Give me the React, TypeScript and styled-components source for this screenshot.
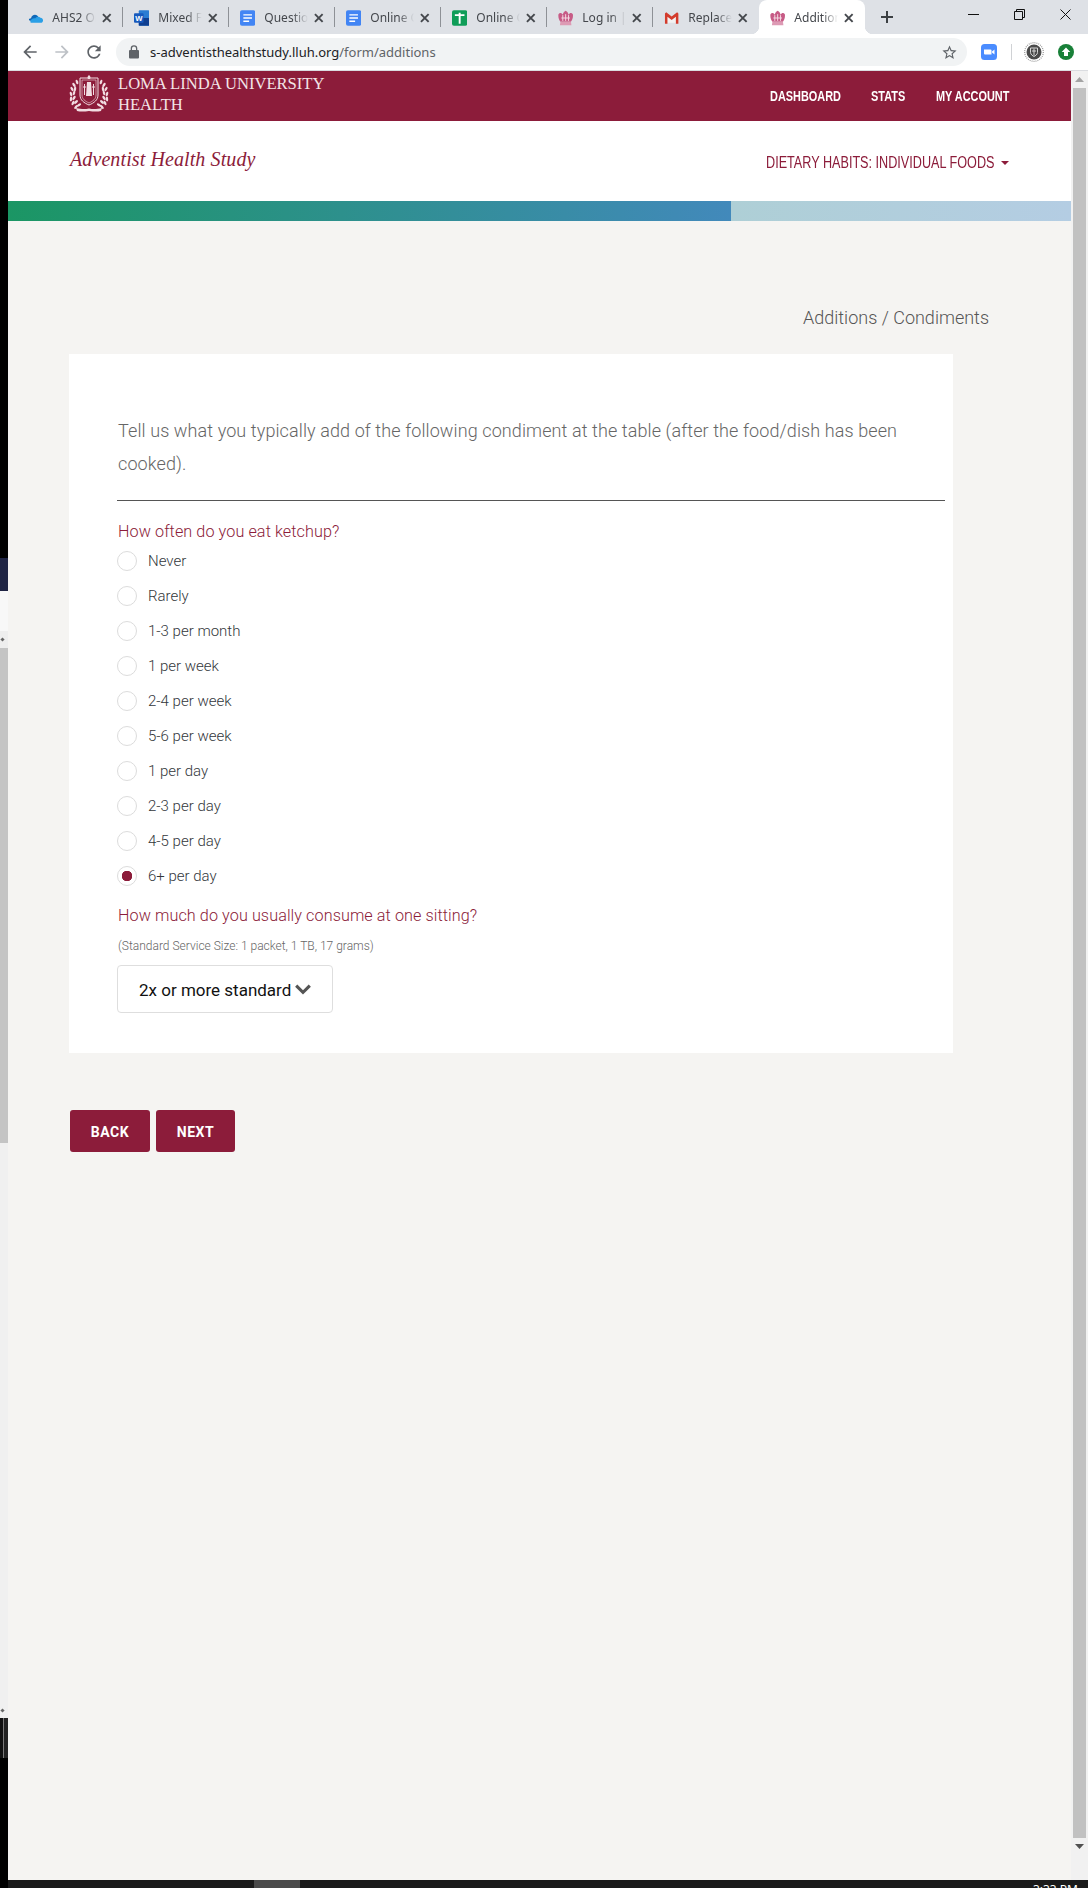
import styled, { createGlobalStyle } from 'styled-components';

const MAROON = '#8c1c3a';

const GlobalStyle = createGlobalStyle`
	html, body {
		margin: 0;
		padding: 0;
		background: #000;
	}
	* {
		box-sizing: border-box;
	}
`;

type TabKind = 'onedrive' | 'word' | 'docs' | 'sheets' | 'crest' | 'gmail';

const TABS: { kind: TabKind; title: string; active?: boolean }[] = [
	{ kind: 'onedrive', title: 'AHS2 Online' },
	{ kind: 'word', title: 'Mixed Foods' },
	{ kind: 'docs', title: 'Question list' },
	{ kind: 'docs', title: 'Online Question' },
	{ kind: 'sheets', title: 'Online Question' },
	{ kind: 'crest', title: 'Log in | Adventist' },
	{ kind: 'gmail', title: 'Replace text' },
	{ kind: 'crest', title: 'Additions', active: true },
];

const FREQUENCIES = [
	'Never',
	'Rarely',
	'1-3 per month',
	'1 per week',
	'2-4 per week',
	'5-6 per week',
	'1 per day',
	'2-3 per day',
	'4-5 per day',
	'6+ per day',
];

// leaves of the wreath, left side; the right side is the mirror of it
const LEAVES = [
	[8, 7, -20],
	[5, 10, -35],
	[6, 14, 10],
	[3, 14, -30],
	[5, 18, 15],
	[2, 19, -15],
	[5, 23, 35],
	[2, 24, 5],
	[7, 27, 50],
	[4, 28, 25],
	[10, 30, 60],
	[7, 32, 40],
];

const Favicon = ({ kind }: { kind: TabKind }) => {
	if (kind === 'onedrive') {
		return (
			<svg width='16' height='16' viewBox='0 0 16 16'>
				<path d='M3.2 8.2C3.6 5.6 6.8 3.6 9.2 5.2c1 .6 1.5 1.4 1.7 2.3L6 11H3C1 11-.4 8.6 3.2 8.2z' fill='#0f68b8' />
				<path d='M3 13h10.4c3-.4 3.2-4.8-.4-5.2-1.6-2-4.4-1.2-5.6.6C5.4 8 4 9 3.2 10 2.4 11 2 12.4 3 13z' fill='#2a9fe6' />
			</svg>
		);
	}
	if (kind === 'word') {
		return (
			<svg width='16' height='16' viewBox='0 0 16 16'>
				<rect x='5' y='0' width='11' height='16' rx='1' fill='#2b7cd3' />
				<rect x='5' y='8' width='11' height='8' fill='#103f91' />
				<rect x='0' y='3' width='10' height='10' rx='1' fill='#185abd' />
				<text x='5' y='11' fontSize='8' fontWeight='700' fill='#fff' textAnchor='middle' fontFamily='Liberation Sans, sans-serif'>
					W
				</text>
			</svg>
		);
	}
	if (kind === 'docs') {
		return (
			<svg width='16' height='16' viewBox='0 0 16 16'>
				<rect width='16' height='16' rx='2' fill='#4285f4' />
				<path d='M3.5 4h9v1.5h-9zM3.5 7.3h9v1.5h-9zM3.5 10.6h6v1.5h-6z' fill='#fff' />
			</svg>
		);
	}
	if (kind === 'sheets') {
		return (
			<svg width='16' height='16' viewBox='0 0 16 16'>
				<rect width='16' height='16' rx='2' fill='#0f9d58' />
				<path d='M3 4h4V2.500h2V4h4v2H9v8H7V6H3z' fill='#fff' />
			</svg>
		);
	}
	if (kind === 'gmail') {
		return (
			<svg width='16' height='16' viewBox='0 0 16 16'>
				<path d='M2 3l6 4.600L14 3v10H2z' fill='#f2f2f2' />
				<path d='M1 3.200 2.300 2 8 6.500 13.700 2 15 3.200V14h-2.600V6.700L8 10 3.600 6.700V14H1z' fill='#d33b2c' />
			</svg>
		);
	}
	return (
		<svg width='16' height='16' viewBox='0 0 16 16'>
			<path d='M.5 4C2 2 4 3 5 4.500 5.500 2 7 1 8 .5c1 .5 2.500 1.500 3 4C12 3 14 2 15.500 4c.5 3-.5 6-2 8h-11C1 10 0 7 .5 4z' fill='#c75b86' />
			<path d='M2.500 12h11l.5 3.500H2z' fill='#dd9ab4' />
			<path d='M5 5v6M8 4v7M11 5v6M3.500 8h9' stroke='#f6dbe5' strokeWidth='1' fill='none' />
		</svg>
	);
};

const LluCrest = () => (
	<svg width='40' height='37' viewBox='0 0 40 37' fill='none'>
		<g fill='#f1dde2'>
			{LEAVES.map(([x, y, r], i) => (
				<g key={i}>
					<ellipse cx={x} cy={y} rx='1.2' ry='2.4' transform={`rotate(${r} ${x} ${y})`} />
					<ellipse cx={40 - x} cy={y} rx='1.2' ry='2.4' transform={`rotate(${-r} ${40 - x} ${y})`} />
				</g>
			))}
		</g>
		<path d='M11 3h18v17c0 5-4 8-9 10-5-2-9-5-9-10z' stroke='#f1dde2' strokeWidth='1' />
		<path d='M13 5h14v15c0 4-3 6-7 8-4-2-7-4-7-8z' stroke='#f1dde2' strokeWidth='.6' />
		<path d='M18 7h4l1 14h-6z' fill='#f1dde2' />
		<path d='M15.500 9v11M14 12h3M24.500 9v11M23 12h3' stroke='#f1dde2' strokeWidth='1' />
		<path d='M20 0c-1.500 1.200-2 2.500-1 4h2c1-1.500.5-2.800-1-4z' fill='#f1dde2' />
		<path d='M7 33c5 1 8 1.500 13 .5 5 1 8 .5 13-.5l-1 3c-4 1-8 .5-12 0-4 .5-8 1-12 0z' fill='#f1dde2' />
	</svg>
);

const Chevron = () => (
	<svg width='16' height='11' viewBox='0 0 16 11'>
		<path d='M2.300.6 8 6.200 13.700.6 15.900 2.800 8 10.500.1 2.800z' fill='#555' />
	</svg>
);

const Arrow = ({ dir }: { dir: 'up' | 'down' }) => (
	<svg width='9' height='5' viewBox='0 0 9 5'>
		<path d={dir === 'up' ? 'M4.500 0 9 5H0z' : 'M0 0h9L4.500 5z'} fill={dir === 'up' ? '#a3a3a3' : '#505050'} />
	</svg>
);

const App = () => {
	return (
		<>
			<GlobalStyle />
			<Screen>
				<OtherWindow>
					<StripPart $h={558} $bg='#000' />
					<StripPart $h={33} $bg='#1f2444' />
					<StripPart $h={40} $bg='#f8f8f8' />
					<StripPart $h={17} $bg='#eeeeee'>
						<StripMark />
					</StripPart>
					<StripPart $h={495} $bg='#c4c4c4' />
					<StripPart $h={575} $bg='#f0f0f0' $end>
						<StripMark />
					</StripPart>
					<StripDark />
					<StripPart $h={130} $bg='#000' />
				</OtherWindow>

				<Browser>
					<TabBar>
						{TABS.map((tab, i) => (
							<Tab key={i} $active={tab.active}>
								<Favicon kind={tab.kind} />
								<TabTitle>{tab.title}</TabTitle>
								<svg width='10' height='10' viewBox='0 0 10 10'>
									<path d='M1 1l8 8M9 1 1 9' stroke='#45484d' strokeWidth='2' />
								</svg>
							</Tab>
						))}
						<NewTab>
							<svg width='12' height='12' viewBox='0 0 12 12'>
								<path d='M6 0v12M0 6h12' stroke='#3c4043' strokeWidth='2' />
							</svg>
						</NewTab>
						<WindowControls>
							<WindowButton>
								<svg width='11' height='11' viewBox='0 0 11 11'>
									<path d='M0 5.500h11' stroke='#111' strokeWidth='1' />
								</svg>
							</WindowButton>
							<WindowButton>
								<svg width='11' height='11' viewBox='0 0 11 11' fill='none'>
									<path d='M.5 2.500h8v8h-8zM2.500 2.500v-2h8v8h-2' stroke='#111' strokeWidth='1' />
								</svg>
							</WindowButton>
							<WindowButton>
								<svg width='11' height='11' viewBox='0 0 11 11'>
									<path d='M.5.500l10 10M10.500.500l-10 10' stroke='#111' strokeWidth='1' />
								</svg>
							</WindowButton>
						</WindowControls>
					</TabBar>

					<Toolbar>
						<ToolButton>
							<svg width='20' height='20' viewBox='0 0 24 24'>
								<path d='M20 11H7.830l5.590-5.590L12 4l-8 8 8 8 1.410-1.410L7.830 13H20v-2z' fill='#5f6368' />
							</svg>
						</ToolButton>
						<ToolButton>
							<svg width='20' height='20' viewBox='0 0 24 24'>
								<path d='M4 11h12.170l-5.590-5.590L12 4l8 8-8 8-1.410-1.410L16.170 13H4v-2z' fill='#bdc1c6' />
							</svg>
						</ToolButton>
						<ToolButton>
							<svg width='20' height='20' viewBox='0 0 24 24'>
								<path
									d='M17.650 6.350C16.200 4.900 14.210 4 12 4c-4.420 0-7.990 3.580-7.990 8s3.570 8 7.990 8c3.730 0 6.840-2.550 7.730-6h-2.080c-.82 2.330-3.040 4-5.650 4-3.310 0-6-2.690-6-6s2.690-6 6-6c1.660 0 3.140.69 4.220 1.780L13 11h7V4l-2.350 2.350z'
									fill='#5f6368'
								/>
							</svg>
						</ToolButton>
						<Omnibox>
							<svg width='12' height='14' viewBox='0 0 12 14'>
								<path
									d='M10 5h-.7V3.500a3.300 3.300 0 0 0-6.600 0V5H2a1 1 0 0 0-1 1v6.500a1 1 0 0 0 1 1h8a1 1 0 0 0 1-1V6a1 1 0 0 0-1-1zM4 5V3.500a2 2 0 0 1 4 0V5z'
									fill='#5f6368'
								/>
							</svg>
							<UrlText>
								s-adventisthealthstudy.lluh.org<UrlPath>/form/additions</UrlPath>
							</UrlText>
							<StarButton>
								<svg width='17' height='17' viewBox='0 0 24 24'>
									<path
										d='M22 9.240l-7.190-.62L12 2 9.190 8.630 2 9.240l5.460 4.730L5.820 21 12 17.270 18.180 21l-1.630-7.030L22 9.240zM12 15.400l-3.760 2.270 1-4.280-3.320-2.880 4.380-.38L12 6.100l1.710 4.040 4.380.38-3.320 2.880 1 4.280L12 15.400z'
										fill='#5f6368'
									/>
								</svg>
							</StarButton>
						</Omnibox>
						<Extension>
							<svg width='16' height='16' viewBox='0 0 16 16'>
								<rect width='16' height='16' rx='3.500' fill='#4a8cff' />
								<path d='M3 5.500h6.500a1 1 0 0 1 1 1v4H4a1 1 0 0 1-1-1zM11 7.500l2.500-2v5l-2.500-2z' fill='#fff' />
							</svg>
						</Extension>
						<ExtensionSeparator />
						<Extension>
							<svg width='20' height='20' viewBox='0 0 20 20' fill='none'>
								<circle cx='10' cy='10' r='9.300' stroke='#9a9a9a' strokeWidth='1.200' strokeDasharray='1 1' />
								<circle cx='10' cy='10' r='7.500' fill='#4a4a4a' />
								<path d='M6.500 6h7v4.500c0 2-2.500 3.500-3.500 4-1-.5-3.500-2-3.500-4z' stroke='#d5d5d5' strokeWidth='1' />
								<path d='M10 6.500v7M8 9h4' stroke='#d5d5d5' strokeWidth='1' />
							</svg>
						</Extension>
						<Extension>
							<svg width='16' height='16' viewBox='0 0 16 16'>
								<circle cx='8' cy='8' r='8' fill='#188038' />
								<path d='M8 3.500 12.300 8H10v4H6V8H3.700z' fill='#fff' />
							</svg>
						</Extension>
					</Toolbar>

					<Viewport>
						<Page>
							<TopBar>
								<Brand>
									<LluCrest />
									<BrandName>
										LOMA LINDA UNIVERSITY
										<br />
										HEALTH
									</BrandName>
								</Brand>
								<TopNav>
									<TopLink $width={70}>DASHBOARD</TopLink>
									<TopLink $width={34}>STATS</TopLink>
									<TopLink $width={73}>MY ACCOUNT</TopLink>
								</TopNav>
							</TopBar>

							<SubBar>
								<StudyName>Adventist Health Study</StudyName>
								<SectionMenu>
									<SectionLabel>DIETARY HABITS: INDIVIDUAL FOODS</SectionLabel>
									<Caret />
								</SectionMenu>
							</SubBar>

							<Progress>
								<ProgressDone $percent={68} />
								<ProgressRest />
							</Progress>

							<Content>
								<PageTitle>Additions / Condiments</PageTitle>
								<Card>
									<Intro>
										Tell us what you typically add of the following condiment at the table (after the food/dish has been cooked).
									</Intro>
									<Rule />
									<Question>How often do you eat ketchup?</Question>
									{FREQUENCIES.map((label) => (
										<RadioRow key={label}>
											<Radio type='radio' name='frequency' defaultChecked={label === '6+ per day'} />
											{label}
										</RadioRow>
									))}
									<SecondQuestion>How much do you usually consume at one sitting?</SecondQuestion>
									<Hint>(Standard Service Size: 1 packet, 1 TB, 17 grams)</Hint>
									<SelectBox type='button'>
										2x or more standard
										<Chevron />
									</SelectBox>
								</Card>
								<Buttons>
									<ActionButton $width={80}>BACK</ActionButton>
									<ActionButton $width={79}>NEXT</ActionButton>
								</Buttons>
							</Content>
						</Page>

						<Scrollbar>
							<ScrollArrow>
								<Arrow dir='up' />
							</ScrollArrow>
							<ScrollThumb />
							<ScrollArrow>
								<Arrow dir='down' />
							</ScrollArrow>
						</Scrollbar>
					</Viewport>

					<Taskbar>
						<TaskbarActive />
						<Clock>3:33 PM</Clock>
					</Taskbar>
				</Browser>
			</Screen>
		</>
	);
};

export default App;

const Screen = styled.div`
	width: 1088px;
	height: 1888px;
	display: flex;
	overflow: hidden;
`;

const OtherWindow = styled.div`
	width: 8px;
	flex: none;
	display: flex;
	flex-direction: column;
`;

const StripPart = styled.div<{ $h: number; $bg: string; $end?: boolean }>`
	height: ${(p) => p.$h}px;
	flex: none;
	background: ${(p) => p.$bg};
	display: flex;
	align-items: ${(p) => (p.$end ? 'flex-end' : 'center')};
	padding-bottom: ${(p) => (p.$end ? '6px' : '0')};
`;

const StripMark = styled.div`
	width: 3px;
	height: 3px;
	margin-left: 1px;
	background: #666;
	transform: rotate(45deg);
`;

const StripDark = styled.div`
	height: 40px;
	flex: none;
	background: #222;
	display: flex;
	justify-content: flex-start;
	border-left: 3px solid #111;

	&::after {
		content: '';
		width: 1px;
		height: 100%;
		background: #7a7a7a;
	}
`;

const Browser = styled.div`
	flex: 1;
	min-width: 0;
	display: flex;
	flex-direction: column;
	font-family: 'Noto Sans', sans-serif;
`;

const TabBar = styled.div`
	height: 34px;
	flex: none;
	display: flex;
	align-items: stretch;
	padding-left: 9px;
	background: #dee1e6;
`;

const Tab = styled.div<{ $active?: boolean }>`
	width: 106px;
	flex: none;
	display: flex;
	align-items: center;
	padding: 1px 11px 0 11px;
	position: relative;
	border-radius: 8px 8px 0 0;
	background: ${(p) => (p.$active ? '#fff' : 'transparent')};

	${(p) =>
		!p.$active &&
		`
		&::after {
			content: '';
			position: absolute;
			right: 0;
			top: 7px;
			bottom: 7px;
			width: 1px;
			background: #8e9196;
		}
		&:nth-child(7)::after {
			display: none;
		}
	`}

	${(p) =>
		p.$active &&
		`
		&::before, &::after {
			content: '';
			position: absolute;
			bottom: 0;
			width: 8px;
			height: 8px;
		}
		&::before {
			left: -8px;
			background: radial-gradient(circle at 0 0, transparent 8px, #fff 8.5px);
		}
		&::after {
			right: -8px;
			background: radial-gradient(circle at 100% 0, transparent 8px, #fff 8.5px);
		}
	`}
`;

const TabTitle = styled.span`
	width: 46px;
	margin: 0 6px 0 9px;
	overflow: hidden;
	white-space: nowrap;
	font-size: 12px;
	color: #44474c;
	-webkit-mask-image: linear-gradient(to right, #000 65%, transparent 100%);
	mask-image: linear-gradient(to right, #000 65%, transparent 100%);
`;

const NewTab = styled.div`
	width: 28px;
	margin-left: 8px;
	display: flex;
	align-items: center;
	justify-content: center;
`;

const WindowControls = styled.div`
	margin-left: auto;
	display: flex;
`;

const WindowButton = styled.div`
	width: 46px;
	height: 28px;
	display: flex;
	align-items: center;
	justify-content: center;
`;

const Toolbar = styled.div`
	height: 37px;
	flex: none;
	display: flex;
	align-items: flex-start;
	padding: 4px 0 0 6px;
	background: #fff;
	border-bottom: 1px solid #dadce0;
`;

const ToolButton = styled.div`
	width: 32px;
	height: 28px;
	display: flex;
	align-items: center;
	justify-content: center;
`;

const Omnibox = styled.div`
	width: 851px;
	height: 28px;
	margin-left: 6px;
	margin-right: 6px;
	padding: 0 4px 0 12px;
	display: flex;
	align-items: center;
	border-radius: 14px;
	background: #f1f3f4;
`;

const UrlText = styled.span`
	margin-left: 10px;
	font-family: 'Noto Sans', sans-serif;
	font-size: 13px;
	color: #202124;
	white-space: nowrap;
`;

const UrlPath = styled.span`
	color: #5f6368;
`;

const StarButton = styled.div`
	width: 28px;
	height: 28px;
	margin-left: auto;
	display: flex;
	align-items: center;
	justify-content: center;
`;

const Extension = styled.div`
	width: 32px;
	height: 28px;
	flex: none;
	display: flex;
	align-items: center;
	justify-content: center;
`;

const ExtensionSeparator = styled.div`
	width: 1px;
	height: 16px;
	margin: 6px 6px 0;
	background: #d0d2d5;
`;

const Viewport = styled.div`
	flex: 1;
	min-height: 0;
	display: flex;
`;

const Page = styled.div`
	flex: 1;
	min-width: 0;
	background: #f5f4f2;
`;

const TopBar = styled.div`
	height: 50px;
	display: flex;
	justify-content: space-between;
	align-items: center;
	padding: 0 62px 0 61px;
	background: ${MAROON};
`;

const Brand = styled.div`
	display: flex;
	align-items: center;
	gap: 9px;
	margin-top: -5px;
	color: #f3e4e7;
`;

const BrandName = styled.div`
	font-family: 'Liberation Serif', serif;
	font-size: 16.6px;
	line-height: 21px;
	margin-top: 1px;
`;

const TopNav = styled.nav`
	display: flex;
	gap: 31px;
`;

// no condensed face is installed, so the text is squeezed to the reference width
const TopLink = styled.a<{ $width: number }>`
	display: block;
	width: ${(p) => p.$width}px;
	white-space: nowrap;
	font-family: 'Liberation Sans', sans-serif;
	font-size: 14px;
	font-weight: 700;
	color: #fff;
	transform: scaleX(0.78);
	transform-origin: 0 50%;
`;

const SubBar = styled.div`
	height: 80px;
	display: flex;
	justify-content: space-between;
	align-items: center;
	padding: 0 62px 0 62px;
	background: #fff;
`;

const StudyName = styled.div`
	font-family: 'Liberation Serif', serif;
	font-style: italic;
	font-size: 20px;
	letter-spacing: 0.1px;
	color: ${MAROON};
	margin-top: -3px;
`;

const SectionMenu = styled.div`
	display: flex;
	align-items: center;
	margin-top: 3px;
`;

const SectionLabel = styled.span`
	display: block;
	width: 229px;
	white-space: nowrap;
	font-family: 'Liberation Sans', sans-serif;
	font-size: 16px;
	color: ${MAROON};
	transform: scaleX(0.79);
	transform-origin: 0 50%;
`;

const Caret = styled.span`
	width: 0;
	height: 0;
	margin-left: 6px;
	margin-top: 1px;
	border-left: 4px solid transparent;
	border-right: 4px solid transparent;
	border-top: 4px solid ${MAROON};
`;

const Progress = styled.div`
	height: 20px;
	display: flex;
`;

const ProgressDone = styled.div<{ $percent: number }>`
	width: ${(p) => p.$percent}%;
	background: linear-gradient(90deg, #1b9664, #4289bb);
`;

const ProgressRest = styled.div`
	flex: 1;
	background: linear-gradient(90deg, #aecfd6, #b4cde3);
`;

const Content = styled.div`
	padding: 0 0 0 61px;
	font-family: 'Roboto', sans-serif;
	font-weight: 300;
`;

const PageTitle = styled.h1`
	margin: 0;
	height: 133px;
	padding: 84px 82px 0 0;
	text-align: right;
	font-size: 18px;
	line-height: 26px;
	font-weight: 300;
	color: #555;
`;

const Card = styled.div`
	width: 884px;
	padding: 60px 8px 40px 48px;
	background: #fff;
`;

const Intro = styled.p`
	margin: 0;
	padding-left: 1px;
	max-width: 800px;
	font-size: 18px;
	letter-spacing: 0.1px;
	line-height: 33px;
	color: #666;
`;

const Rule = styled.hr`
	margin: 20px 0;
	border: 0;
	border-top: 1px solid #555;
`;

const Question = styled.div`
	padding-left: 1px;
	font-size: 16.2px;
	letter-spacing: 0.08px;
	line-height: 22px;
	color: ${MAROON};
`;

const SecondQuestion = styled(Question)`
	margin-top: 12px;
`;

const RadioRow = styled.label`
	height: 35px;
	display: flex;
	align-items: center;
	gap: 11px;
	font-size: 15px;
	color: #33373b;
`;

const Radio = styled.input`
	appearance: none;
	width: 20px;
	height: 20px;
	margin: 0;
	flex: none;
	border: 1px solid #dcdcdc;
	border-radius: 50%;
	background: #fff;

	&:checked {
		background: radial-gradient(circle, ${MAROON} 0, ${MAROON} 5px, #fff 5.5px);
	}
`;

const Hint = styled.div`
	margin-top: 11px;
	padding-left: 1px;
	font-size: 12px;
	line-height: 16px;
	color: #666;
`;

const SelectBox = styled.button`
	width: 216px;
	height: 48px;
	margin-top: 11px;
	padding: 1px 0 0 21px;
	display: flex;
	align-items: center;
	gap: 4px;
	font-family: 'Roboto', sans-serif;
	font-size: 17px;
	color: #111;
	white-space: nowrap;
	background: #fff;
	border: 1px solid #dedede;
	border-radius: 4px;
`;

const Buttons = styled.div`
	display: flex;
	gap: 6px;
	margin: 57px 0 0 1px;
`;

const ActionButton = styled.button<{ $width: number }>`
	width: ${(p) => p.$width}px;
	height: 42px;
	padding: 1px 0 0;
	border: 0;
	border-radius: 3px;
	background: ${MAROON};
	color: #fff;
	font-family: 'Roboto', sans-serif;
	font-size: 14px;
	font-weight: 700;
	letter-spacing: 0.5px;
`;

const Scrollbar = styled.div`
	width: 17px;
	flex: none;
	display: flex;
	flex-direction: column;
	align-items: stretch;
	background: #f1f1f1;
`;

const ScrollArrow = styled.div`
	height: 17px;
	flex: none;
	display: flex;
	align-items: center;
	justify-content: center;
`;

const ScrollThumb = styled.div`
	flex: none;
	height: 1750px;
	margin: 0 2px;
	background: #c1c1c1;
`;

const Taskbar = styled.div`
	height: 8px;
	flex: none;
	display: flex;
	overflow: hidden;
	background: #1a1a1a;
`;

const TaskbarActive = styled.div`
	width: 46px;
	margin-left: 246px;
	background: #4a4a4a;
`;

const Clock = styled.div`
	margin-left: auto;
	margin-right: 10px;
	padding-top: 3px;
	font-family: 'Noto Sans', sans-serif;
	font-size: 12px;
	line-height: 14px;
	color: #fff;
`;
